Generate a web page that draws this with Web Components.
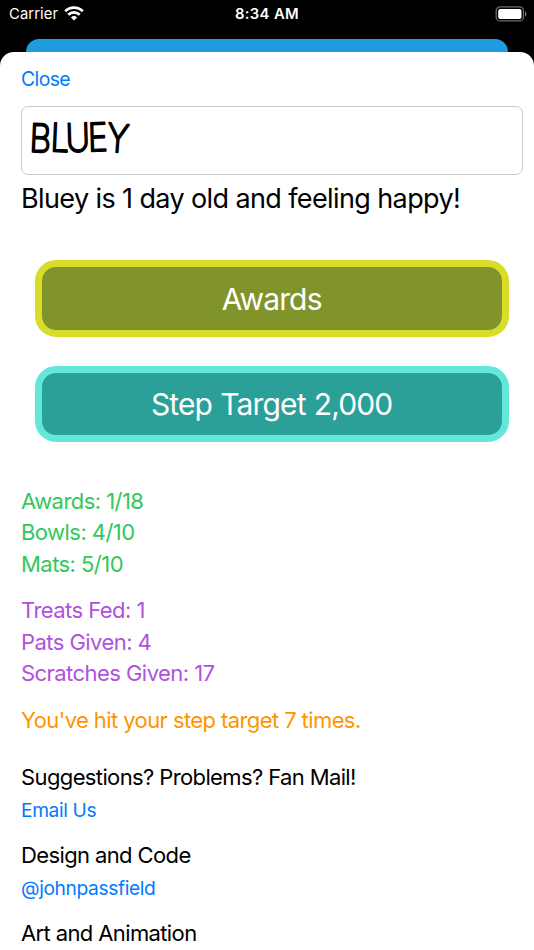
<!DOCTYPE html>
<html lang="en">
<head>
<meta charset="utf-8">
<title>Pet profile</title>
<style>
body {
  margin: 0;
  background: #000;
  font-family: Inter, "Liberation Sans", sans-serif;
  overflow: hidden;
}
</style>
</head>
<body>
<pet-screen></pet-screen>

<script>
function define(name, html) {
  const tpl = document.createElement('template');
  tpl.innerHTML = html;
  customElements.define(name, class extends HTMLElement {
    constructor() {
      super();
      this.attachShadow({ mode: 'open' });
      this.shadowRoot.appendChild(tpl.content.cloneNode(true));
    }
  });
}

define('status-bar', `
<style>
:host {
  display: grid;
  grid-template-columns: 1fr auto 1fr;
  align-items: center;
  height: 28px;
  padding: 0 7px 0 9px;
  box-sizing: border-box;
  color: #fff;
  font-size: 14.8px;
  line-height: 28px;
}
.carrier { display: flex; align-items: center; gap: 6px; }
.carrier span { letter-spacing: 0.1px; }
.carrier svg { margin-top: -2px; }
.time { font-weight: 600; letter-spacing: 0.35px; margin-left: -2px; }
.battery { justify-self: end; display: flex; margin-top: -1px; }
svg { display: block; }
</style>
<div class="carrier">
  <span>Carrier</span>
  <svg width="20" height="15" viewBox="0 0 20 15">
    <g fill="none" stroke="#fff" stroke-width="2.7">
      <path d="M1.2 5.2a12.7 12.7 0 0 1 17.6 0"/>
      <path d="M4.3 8.7a8.1 8.1 0 0 1 11.4 0"/>
    </g>
    <path fill="#fff" d="M10 14.6l3.1-3.2a4.5 4.5 0 0 0-6.2 0z"/>
  </svg>
</div>
<div class="time">8:34 AM</div>
<div class="battery">
  <svg width="32" height="16" viewBox="0 0 32 16">
    <rect x="1.2" y=".9" width="27.3" height="14" rx="4" fill="none" stroke="#6b6b6b" stroke-width="1.3"/>
    <rect x="3.2" y="2.9" width="23.3" height="10" rx="2" fill="#fff"/>
    <path d="M30 5.4a2.8 2.8 0 0 1 0 5z" fill="#777"/>
  </svg>
</div>
`);

// hand-lettered look: thin glyphs with a round pen stroke, each tilted a little
define('name-field', `
<style>
:host {
  display: flex;
  align-items: flex-start;
  height: 69px;
  padding: 6px 7px;
  margin-right: 0.5px;
  box-sizing: border-box;
  border: 1px solid #c8c8c8;
  border-radius: 7px;
}
svg { display: block; overflow: visible; }
text {
  font-size: 39px;
  font-weight: 200;
  fill: #000;
  stroke: #000;
  stroke-width: 2px;
  stroke-linejoin: round;
  stroke-linecap: round;
}
</style>
<svg width="110" height="50" viewBox="0 0 110 50">
  <g transform="scale(.86 1)">
    <text x="0 24.5 43 69 89.5" y="38.5 38 39 38.5 38" rotate="3 3 -2 -2 5">BLUEY</text>
  </g>
</svg>
`);

define('pill-button', `
<style>
:host { display: block; }
button {
  display: block;
  width: 100%;
  height: 76.5px;
  padding: 1px 1px 0 0;
  border: 7px solid var(--edge);
  border-radius: 21px;
  background: var(--fill);
  color: #fff;
  font: inherit;
  font-size: 30px;
  letter-spacing: -0.85px;
  word-spacing: 0.5px;
}
</style>
<button><slot></slot></button>
`);

define('stat-group', `
<style>
:host {
  display: flex;
  flex-direction: column;
  font-size: 22px;
  line-height: 31.4px;
  letter-spacing: -0.55px;
}
</style>
<slot></slot>
`);

define('credit-item', `
<style>
:host {
  display: flex;
  flex-direction: column;
  font-size: 22px;
  line-height: 31.4px;
  letter-spacing: -0.62px;
}
::slotted(a) {
  color: #007aff;
  font-size: 19.2px;
  line-height: 32.4px;
  letter-spacing: -0.38px;
  text-decoration: none;
}
</style>
<slot name="label"></slot>
<slot></slot>
`);

define('pet-sheet', `
<style>
:host {
  display: block;
  background: #fff;
  border-radius: 14px 14px 0 0;
  height: 898px;
  box-sizing: border-box;
  padding: 12px 10.5px 0 21px;
  overflow: hidden;
}
.close {
  display: block;
  color: #007aff;
  font-size: 19.4px;
  line-height: 30px;
  letter-spacing: -0.6px;
  margin-bottom: 12px;
}
</style>
<span class="close">Close</span>
<slot></slot>
`);

define('pet-screen', `
<style>
:host { display: block; height: 950px; overflow: hidden; }
.behind {
  height: 13px;
  margin: 11px 26px 0;
  border-radius: 13px 13px 0 0;
  background: #219be0;
}
.mood {
  font-size: 27px;
  line-height: 36px;
  letter-spacing: -0.61px;
  margin-top: 6px;
  white-space: nowrap;
}
.buttons {
  display: flex;
  flex-direction: column;
  gap: 29px;
  margin: 43px 14.5px 0 14.3px;
}
.awards { --edge: #d9dc29; --fill: #81942b; }
.steps { --edge: #63e7da; --fill: #2ba098; }
.stats {
  display: flex;
  flex-direction: column;
  gap: 15.3px;
  margin-top: 43.7px;
}
.green { color: #34c759; }
.purple { color: #af52de; }
.orange { color: #ff9500; letter-spacing: -0.59px; }
.credits {
  display: flex;
  flex-direction: column;
  gap: 14.2px;
  margin-top: 26.3px;
}
</style>
<status-bar></status-bar>
<div class="behind"></div>
<pet-sheet>
  <name-field></name-field>
  <div class="mood">Bluey is 1 day old and feeling happy!</div>
  <div class="buttons">
    <pill-button class="awards">Awards</pill-button>
    <pill-button class="steps">Step Target 2,000</pill-button>
  </div>
  <div class="stats">
    <stat-group class="green">
      <span>Awards: 1/18</span>
      <span>Bowls: 4/10</span>
      <span>Mats: 5/10</span>
    </stat-group>
    <stat-group class="purple">
      <span>Treats Fed: 1</span>
      <span>Pats Given: 4</span>
      <span>Scratches Given: 17</span>
    </stat-group>
    <stat-group class="orange">
      <span>You've hit your step target 7 times.</span>
    </stat-group>
  </div>
  <div class="credits">
    <credit-item>
      <span slot="label">Suggestions? Problems? Fan Mail!</span>
      <a>Email Us</a>
    </credit-item>
    <credit-item>
      <span slot="label">Design and Code</span>
      <a>@johnpassfield</a>
    </credit-item>
    <credit-item>
      <span slot="label">Art and Animation</span>
    </credit-item>
  </div>
</pet-sheet>
`);
</script>
</body>
</html>
